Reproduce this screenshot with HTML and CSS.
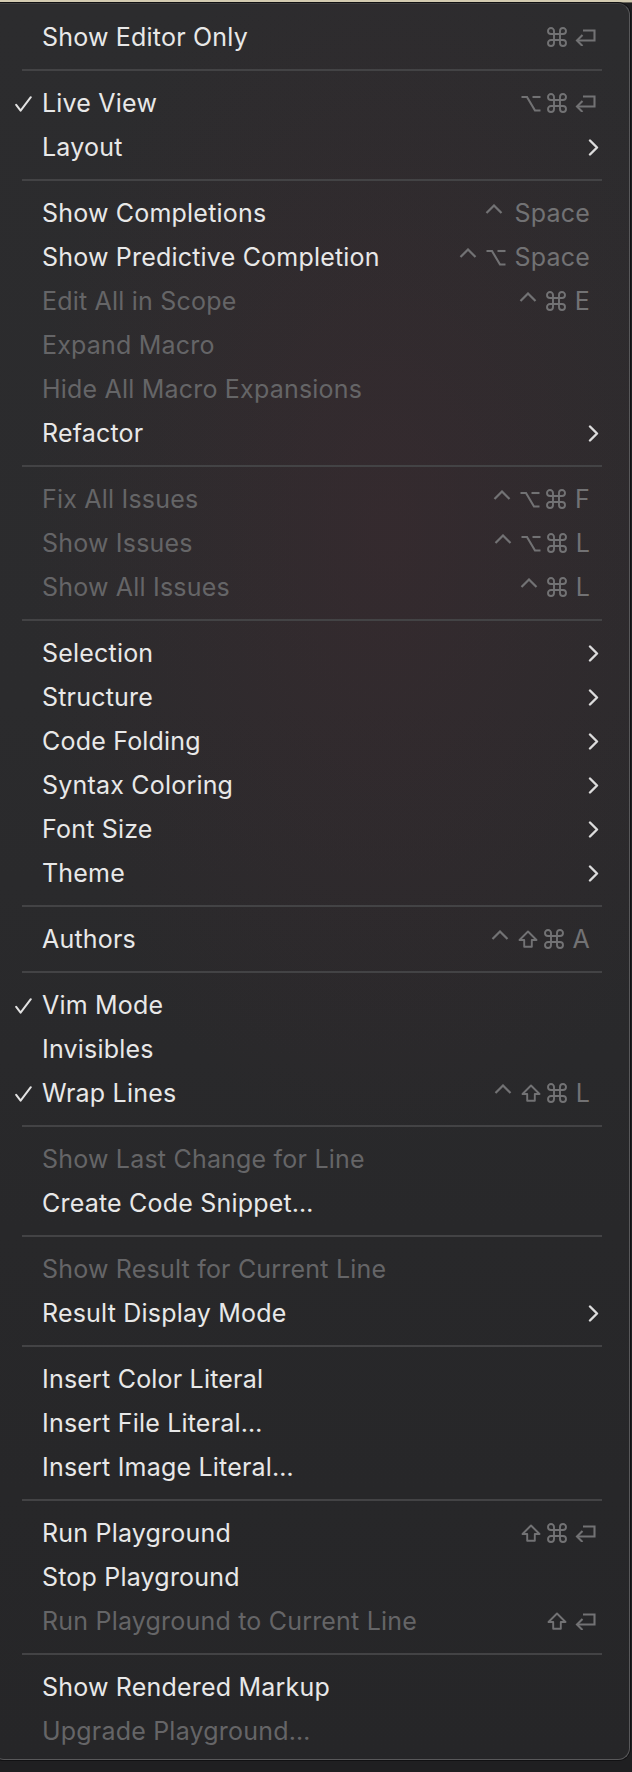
FILE: index.html
```html
<!DOCTYPE html>
<html>
<head>
<meta charset="utf-8">
<link rel="stylesheet" href="styles.css">
</head>
<body>
<svg class="defs" width="0" height="0" aria-hidden="true">
  <defs>
    <symbol id="cmd" viewBox="0 0 20 20">
      <path d="M7 7 V4 A3 3 0 1 0 4 7 H16 A3 3 0 1 0 13 4 V16 A3 3 0 1 0 16 13 H4 A3 3 0 1 0 7 16 Z" fill="none" stroke="currentColor" stroke-width="1.9" stroke-linejoin="round"/>
    </symbol>
    <symbol id="ret" viewBox="0 0 22 17">
      <path d="M9 1.5 H20.5 V11.5 H3" fill="none" stroke="currentColor" stroke-width="2.1" stroke-linejoin="miter"/>
      <path d="M8.5 6 L3 11.5 L8.5 17" fill="none" stroke="currentColor" stroke-width="2.1"/>
    </symbol>
    <symbol id="opt" viewBox="0 0 20 17">
      <path d="M0.5 2 H6 L14 15.5 H19.5" fill="none" stroke="currentColor" stroke-width="2.1"/>
      <path d="M11.5 2 H19.5" fill="none" stroke="currentColor" stroke-width="2.1"/>
    </symbol>
    <symbol id="shift" viewBox="0 0 20 18">
      <path d="M10 1.5 L1.5 10 H6.2 V16.8 H13.8 V10 H18.5 Z" fill="none" stroke="currentColor" stroke-width="1.9" stroke-linejoin="round"/>
    </symbol>
    <symbol id="ctrl" viewBox="0 0 18 10">
      <path d="M1.5 9 L9 1.5 L16.5 9" fill="none" stroke="currentColor" stroke-width="2.2"/>
    </symbol>
    <symbol id="chev" viewBox="0 0 11 17">
      <path d="M2 1.5 L9 8.5 L2 15.5" fill="none" stroke="currentColor" stroke-width="2.4" stroke-linecap="round" stroke-linejoin="round"/>
    </symbol>
    <symbol id="tick" viewBox="0 0 17 16">
      <path d="M1.2 8.8 L5.6 14.6 L15.8 1.2" fill="none" stroke="currentColor" stroke-width="2" stroke-linecap="round" stroke-linejoin="round"/>
    </symbol>
  </defs>
</svg>

<div class="topstrip"></div>
<div class="menu">
  <div class="item"><span class="check"></span><span class="label">Show Editor Only</span><span class="keys"><svg class="k-cmd"><use href="#cmd"/></svg><svg class="k-ret"><use href="#ret"/></svg></span></div>
  <div class="sep"></div>
  <div class="item"><span class="check"><svg class="tick"><use href="#tick"/></svg></span><span class="label">Live View</span><span class="keys"><svg class="k-opt"><use href="#opt"/></svg><svg class="k-cmd"><use href="#cmd"/></svg><svg class="k-ret"><use href="#ret"/></svg></span></div>
  <div class="item"><span class="check"></span><span class="label">Layout</span><span class="keys"><svg class="chev"><use href="#chev"/></svg></span></div>
  <div class="sep"></div>
  <div class="item"><span class="check"></span><span class="label">Show Completions</span><span class="keys"><svg class="k-ctrl"><use href="#ctrl"/></svg><span class="k-txt">Space</span></span></div>
  <div class="item"><span class="check"></span><span class="label">Show Predictive Completion</span><span class="keys"><svg class="k-ctrl"><use href="#ctrl"/></svg><svg class="k-opt"><use href="#opt"/></svg><span class="k-txt">Space</span></span></div>
  <div class="item disabled"><span class="check"></span><span class="label">Edit All in Scope</span><span class="keys"><svg class="k-ctrl"><use href="#ctrl"/></svg><svg class="k-cmd"><use href="#cmd"/></svg><span class="k-txt">E</span></span></div>
  <div class="item disabled"><span class="check"></span><span class="label">Expand Macro</span></div>
  <div class="item disabled"><span class="check"></span><span class="label">Hide All Macro Expansions</span></div>
  <div class="item"><span class="check"></span><span class="label">Refactor</span><span class="keys"><svg class="chev"><use href="#chev"/></svg></span></div>
  <div class="sep"></div>
  <div class="item disabled"><span class="check"></span><span class="label">Fix All Issues</span><span class="keys"><svg class="k-ctrl"><use href="#ctrl"/></svg><svg class="k-opt"><use href="#opt"/></svg><svg class="k-cmd"><use href="#cmd"/></svg><span class="k-txt">F</span></span></div>
  <div class="item disabled"><span class="check"></span><span class="label">Show Issues</span><span class="keys"><svg class="k-ctrl"><use href="#ctrl"/></svg><svg class="k-opt"><use href="#opt"/></svg><svg class="k-cmd"><use href="#cmd"/></svg><span class="k-txt">L</span></span></div>
  <div class="item disabled"><span class="check"></span><span class="label">Show All Issues</span><span class="keys"><svg class="k-ctrl"><use href="#ctrl"/></svg><svg class="k-cmd"><use href="#cmd"/></svg><span class="k-txt">L</span></span></div>
  <div class="sep"></div>
  <div class="item"><span class="check"></span><span class="label">Selection</span><span class="keys"><svg class="chev"><use href="#chev"/></svg></span></div>
  <div class="item"><span class="check"></span><span class="label">Structure</span><span class="keys"><svg class="chev"><use href="#chev"/></svg></span></div>
  <div class="item"><span class="check"></span><span class="label">Code Folding</span><span class="keys"><svg class="chev"><use href="#chev"/></svg></span></div>
  <div class="item"><span class="check"></span><span class="label">Syntax Coloring</span><span class="keys"><svg class="chev"><use href="#chev"/></svg></span></div>
  <div class="item"><span class="check"></span><span class="label">Font Size</span><span class="keys"><svg class="chev"><use href="#chev"/></svg></span></div>
  <div class="item"><span class="check"></span><span class="label">Theme</span><span class="keys"><svg class="chev"><use href="#chev"/></svg></span></div>
  <div class="sep"></div>
  <div class="item"><span class="check"></span><span class="label">Authors</span><span class="keys"><svg class="k-ctrl"><use href="#ctrl"/></svg><svg class="k-shift"><use href="#shift"/></svg><svg class="k-cmd"><use href="#cmd"/></svg><span class="k-txt">A</span></span></div>
  <div class="sep"></div>
  <div class="item"><span class="check"><svg class="tick"><use href="#tick"/></svg></span><span class="label">Vim Mode</span></div>
  <div class="item"><span class="check"></span><span class="label">Invisibles</span></div>
  <div class="item"><span class="check"><svg class="tick"><use href="#tick"/></svg></span><span class="label">Wrap Lines</span><span class="keys"><svg class="k-ctrl"><use href="#ctrl"/></svg><svg class="k-shift"><use href="#shift"/></svg><svg class="k-cmd"><use href="#cmd"/></svg><span class="k-txt">L</span></span></div>
  <div class="sep"></div>
  <div class="item disabled"><span class="check"></span><span class="label">Show Last Change for Line</span></div>
  <div class="item"><span class="check"></span><span class="label">Create Code Snippet…</span></div>
  <div class="sep"></div>
  <div class="item disabled"><span class="check"></span><span class="label">Show Result for Current Line</span></div>
  <div class="item"><span class="check"></span><span class="label">Result Display Mode</span><span class="keys"><svg class="chev"><use href="#chev"/></svg></span></div>
  <div class="sep"></div>
  <div class="item"><span class="check"></span><span class="label">Insert Color Literal</span></div>
  <div class="item"><span class="check"></span><span class="label">Insert File Literal…</span></div>
  <div class="item"><span class="check"></span><span class="label">Insert Image Literal…</span></div>
  <div class="sep"></div>
  <div class="item"><span class="check"></span><span class="label">Run Playground</span><span class="keys"><svg class="k-shift"><use href="#shift"/></svg><svg class="k-cmd"><use href="#cmd"/></svg><svg class="k-ret"><use href="#ret"/></svg></span></div>
  <div class="item"><span class="check"></span><span class="label">Stop Playground</span></div>
  <div class="item disabled"><span class="check"></span><span class="label">Run Playground to Current Line</span><span class="keys"><svg class="k-shift"><use href="#shift"/></svg><svg class="k-ret"><use href="#ret"/></svg></span></div>
  <div class="sep"></div>
  <div class="item"><span class="check"></span><span class="label">Show Rendered Markup</span></div>
  <div class="item disabled"><span class="check"></span><span class="label">Upgrade Playground…</span></div>
</div>
</body>
</html>
```

FILE: styles.css
```css
* { box-sizing: border-box; }

html, body {
  margin: 0;
  padding: 0;
}

body {
  width: 632px;
  height: 1772px;
  overflow: hidden;
  background: #1f1f21;
  font-family: "Inter", "Liberation Sans", sans-serif;
}

.defs {
  position: absolute;
  width: 0;
  height: 0;
  overflow: hidden;
}

.topstrip {
  height: 3px;
  background: #d3cbb1;
  border-bottom: 1px solid #6a665b;
}

.menu {
  margin-left: -8px;
  width: 638px;
  height: 1757px;
  border: 1px solid #58585a;
  border-top-color: #3c3c3e;
  border-radius: 0 12px 12px 12px;
  box-shadow: 0 0 0 1px #111113;
  padding: 11px 0 5px 0;
  background:
    radial-gradient(ellipse 360px 620px at 62% 30%, rgba(72, 40, 48, 0.32), rgba(72, 40, 48, 0) 100%),
    linear-gradient(180deg, #2c2c2e 0%, #2b2b2d 40%, #28282a 70%, #262628 100%);
}

.item {
  height: 44px;
  display: flex;
  align-items: center;
  padding: 0 33px 0 22px;
  color: #e8e8e8;
  font-size: 25px;
  letter-spacing: 0.2px;
}

.item.disabled {
  color: #656567;
}

.check {
  width: 27px;
  flex: none;
  display: flex;
  align-items: center;
}

.tick {
  width: 17px;
  height: 16px;
  color: #e2e2e2;
  margin-top: 1px;
}

.label {
  white-space: nowrap;
}

.keys {
  margin-left: auto;
  display: flex;
  align-items: center;
  gap: 6px;
  color: #727274;
}

.keys svg {
  flex: none;
  display: block;
}

.k-cmd { width: 20px; height: 20px; }
.k-ret { width: 22px; height: 17px; margin-left: 1px; }
.k-opt { width: 20px; height: 17px; }
.k-shift { width: 20px; height: 18px; }
.k-ctrl { width: 18px; height: 10px; margin-bottom: 8px; margin-right: 3px; }

.k-txt {
  font-size: 25px;
  margin-left: 3px;
  margin-right: 6px;
}

.chev {
  width: 11px;
  height: 17px;
  color: #dcdcdc;
  margin-right: -3px;
}

.sep {
  height: 22px;
  display: flex;
  align-items: center;
  padding: 0 27px 0 29px;
}

.sep::before {
  content: "";
  display: block;
  flex: 1;
  height: 2px;
  background: #434345;
}
```
